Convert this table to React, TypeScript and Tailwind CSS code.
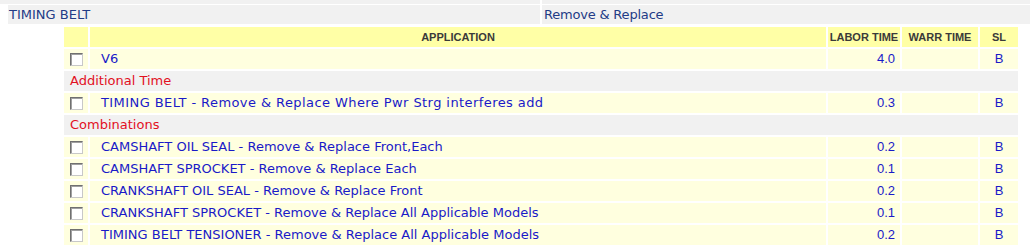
import React from "react";

const Box = () => (
  <div className="w-[13px] h-[13px] border border-t-[#707070] border-l-[#707070] border-r-[#c8c8c8] border-b-[#c8c8c8] bg-white shadow-[inset_1px_1px_0_#a0a0a0]" />
);

type Row =
  | { kind: "item"; main: string; op: string; q: string; wide?: boolean; time: string }
  | { kind: "sec"; label: string };

const rows: Row[] = [
  { kind: "item", main: "V6", op: "", q: "", time: "4.0" },
  { kind: "sec", label: "Additional Time" },
  { kind: "item", main: "TIMING BELT", op: " - Remove & Replace", q: " Where Pwr Strg interferes add", wide: true, time: "0.3" },
  { kind: "sec", label: "Combinations" },
  { kind: "item", main: "CAMSHAFT OIL SEAL", op: " - Remove & Replace", q: " Front,Each", time: "0.2" },
  { kind: "item", main: "CAMSHAFT SPROCKET", op: " - Remove & Replace", q: " Each", time: "0.1" },
  { kind: "item", main: "CRANKSHAFT OIL SEAL", op: " - Remove & Replace", q: " Front", time: "0.2" },
  { kind: "item", main: "CRANKSHAFT SPROCKET", op: " - Remove & Replace", q: " All Applicable Models", time: "0.1" },
  { kind: "item", main: "TIMING BELT TENSIONER", op: " - Remove & Replace", q: " All Applicable Models", time: "0.2" },
];

const dv = { fontFamily: '"DejaVu Sans", Tahoma, sans-serif' };
const lib = { fontFamily: '"Liberation Sans", Arial, sans-serif' };

export default function App() {
  return (
    <div className="w-[1030px] h-[248px] bg-white overflow-hidden" style={lib}>
      <div className="flex gap-[2px] h-[4px]">
        <div className="w-[540px] bg-[#f1f1f1]" />
        <div className="flex-1 bg-[#f1f1f1]" />
      </div>
      <div className="flex gap-[2px] h-[19px] mt-[1px] pl-[8px]" style={dv}>
        <div className="w-[532px] bg-[#f1f1f1] pl-[1px] text-[13px] leading-[19px] text-[#233c86]">TIMING BELT</div>
        <div className="flex-1 bg-[#f1f1f1] pl-[2px] text-[13px] leading-[19px] text-[#233c86] tracking-[-0.2px]">Remove &amp; Replace</div>
      </div>
      <div className="pl-[64px] pt-[3px]">
        <div className="w-[954px] flex flex-col gap-[2px]">
          <div className="flex gap-[2px] h-[20px] text-[11px] font-bold text-[#3a3a3a] leading-[20px]">
            <div className="w-[24px] bg-[#ffffa6]" />
            <div className="w-[736px] bg-[#ffffa6] text-center">APPLICATION</div>
            <div className="w-[72px] bg-[#ffffa6] text-center">LABOR TIME</div>
            <div className="w-[76px] bg-[#ffffa6] text-center">WARR TIME</div>
            <div className="flex-1 bg-[#ffffa6] text-center">SL</div>
          </div>
          {rows.map((r, i) =>
            r.kind === "sec" ? (
              <div key={i} className="h-[20px] bg-[#f1f1f1] pl-[6px] text-[13px] leading-[20px] text-[#e2101f]" style={dv}>
                {r.label}
              </div>
            ) : (
              <div key={i} className="flex gap-[2px] h-[20px] text-[13px] leading-[20px] text-[#1a1ac8]">
                <div className="w-[24px] bg-[#ffffdf] flex items-center pl-[6px]">
                  <Box />
                </div>
                <div
                  className={r.wide ? "w-[736px] bg-[#ffffdf] pl-[11px] whitespace-pre tracking-[0.42px]" : "w-[736px] bg-[#ffffdf] pl-[11px] whitespace-pre"}
                  style={dv}
                >
                  {r.main}
                  {r.op}
                  {r.q}
                </div>
                <div className="w-[72px] bg-[#ffffdf] text-right pr-[5px]">{r.time}</div>
                <div className="w-[76px] bg-[#ffffdf]" />
                <div className="flex-1 bg-[#ffffdf] text-center">B</div>
              </div>
            )
          )}
        </div>
      </div>
    </div>
  );
}
